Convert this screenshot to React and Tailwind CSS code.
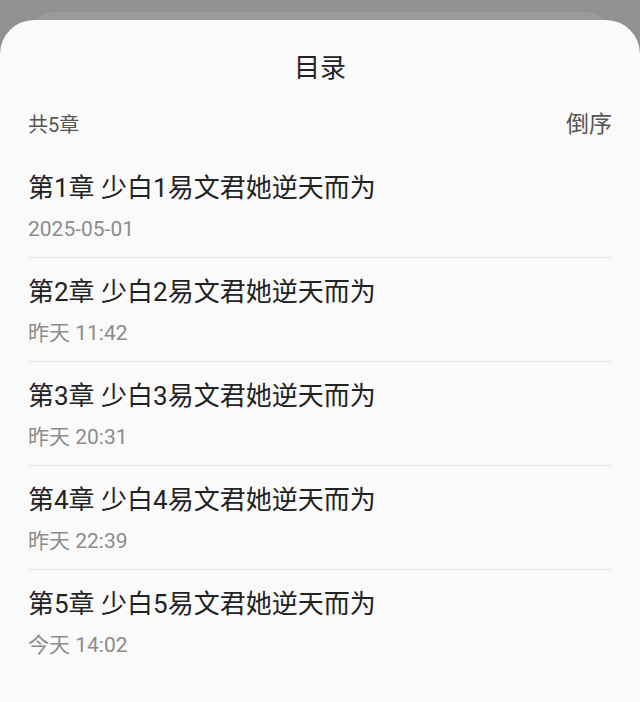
import React from "react";

const chapters = [
  { id: 1, title: "第1章 少白1易文君她逆天而为", time: "2025-05-01" },
  { id: 2, title: "第2章 少白2易文君她逆天而为", time: "昨天 11:42" },
  { id: 3, title: "第3章 少白3易文君她逆天而为", time: "昨天 20:31" },
  { id: 4, title: "第4章 少白4易文君她逆天而为", time: "昨天 22:39" },
  { id: 5, title: "第5章 少白5易文君她逆天而为", time: "今天 14:02" },
];

export default function App() {
  return (
    <div
      className="relative h-[702px] w-[640px] overflow-hidden bg-[#919191]"
      style={{ fontFamily: 'Roboto, "Noto Sans CJK SC", sans-serif' }}
    >
      {/* sheet stacked behind */}
      <div className="absolute left-[26px] right-[26px] top-[12px] h-[40px] rounded-t-[28px] bg-[#9a9a9a]" />

      <div className="absolute inset-x-0 bottom-0 top-[20px] rounded-t-[34px] bg-[#fafafa] px-[28px] pt-[30px]">
        <h1 className="text-center text-[26px] leading-[36px] text-[#222]">目录</h1>

        <div className="mt-[24px] flex h-[30px] items-center justify-between">
          <span className="text-[20px] text-[#555]">共5章</span>
          <button className="text-[23px] text-[#555]">倒序</button>
        </div>

        <ul className="mt-[14px]">
          {chapters.map((c, i) => (
            <li
              key={c.id}
              className={`pt-[17px] pb-[14px] ${
                i < chapters.length - 1 ? "border-b border-[#e6e6e6]" : ""
              }`}
            >
              <div className="text-[26px] leading-[34px] text-[#222]">{c.title}</div>
              <div className="mt-[10px] text-[21px] leading-[28px] text-[#8c8c8c]">
                {c.time}
              </div>
            </li>
          ))}
        </ul>
      </div>
    </div>
  );
}
